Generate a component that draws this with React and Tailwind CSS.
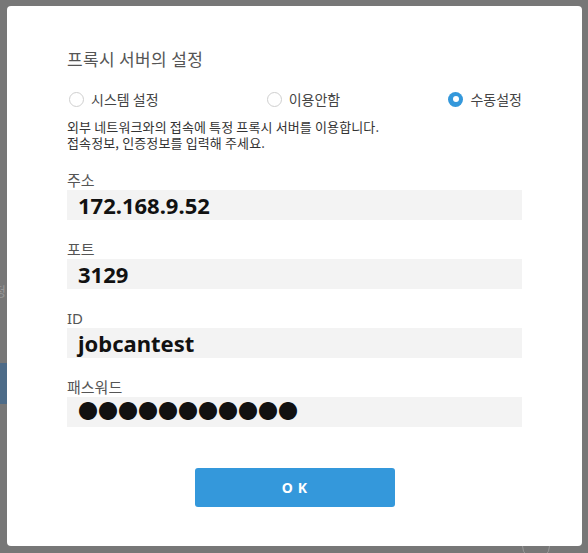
import React from "react";

const kr = { fontFamily: '"Noto Sans CJK KR", "Noto Sans", sans-serif' };
const latin = { fontFamily: '"Noto Sans", "Noto Sans CJK KR", sans-serif' };

function Radio({ label, checked }) {
  return (
    <label className="flex items-center gap-[7px] cursor-pointer">
      {checked ? (
        <span className="w-[15px] h-[15px] rounded-full bg-[#3498db] flex items-center justify-center">
          <span className="w-[6px] h-[6px] rounded-full bg-white" />
        </span>
      ) : (
        <span className="w-[15px] h-[15px] rounded-full border border-[#cfcfcf] bg-white" />
      )}
      <span className="text-[14px] leading-[20px] text-[#444]" style={kr}>
        {label}
      </span>
    </label>
  );
}

function Field({ label, value, latinLabel, dots }) {
  return (
    <div className="mt-[19px] first:mt-0">
      <div
        className="text-[15px] leading-[20px] text-[#555]"
        style={latinLabel ? latin : kr}
      >
        {label}
      </div>
      <div className="h-[30px] bg-[#f3f3f3] flex items-center pl-[11px]">
        <span
          className={
            dots
              ? "text-[20px] leading-[30px] text-[#111]"
              : "text-[22px] leading-[30px] font-bold text-[#111]"
          }
          style={latin}
        >
          {value}
        </span>
      </div>
    </div>
  );
}

export default function App() {
  return (
    <div className="w-[588px] h-[553px] bg-[#777777] relative overflow-hidden">
      <div className="absolute left-0 top-[363px] w-[7px] h-[41px] bg-[#4d6b88]" />
      <div
        className="absolute left-[-6px] top-[281px] text-[13px] text-[#999]"
        style={kr}
      >
        정
      </div>
      <div className="absolute left-[522px] top-[532px] w-[28px] h-[28px] rounded-full border border-[#999]" />
      <div className="absolute left-[7px] top-[6px] w-[575px] h-[540px] bg-white rounded-[4px] px-[60px] pt-[42px]">
        <div
          className="text-[17px] leading-[22px] text-[#555] tracking-[0.02em]"
          style={kr}
        >
          프록시 서버의 설정
        </div>
        <div className="mt-[19px] flex justify-between items-center pl-[2px]">
          <Radio label="시스템 설정" />
          <Radio label="이용안함" />
          <Radio label="수동설정" checked />
        </div>
        <div
          className="mt-[10px] text-[13px] text-[#333] tracking-[0.01em]"
          style={kr}
        >
          <div className="h-[16px] leading-[16px]">
            외부 네트워크와의 접속에 특정 프록시 서버를 이용합니다.
          </div>
          <div className="h-[16px] leading-[16px]">
            접속정보, 인증정보를 입력해 주세요.
          </div>
        </div>
        <div className="mt-[19px]">
          <Field label="주소" value="172.168.9.52" />
          <Field label="포트" value="3129" />
          <Field label="ID" value="jobcantest" latinLabel />
          <Field label="패스워드" value="●●●●●●●●●●●" dots />
        </div>
        <div className="mt-[41px] flex justify-center">
          <button
            className="w-[200px] h-[39px] bg-[#3498db] rounded-[3px] text-white text-[14px] font-bold tracking-[0.35em] pl-[0.35em]"
            style={latin}
          >
            OK
          </button>
        </div>
      </div>
    </div>
  );
}
